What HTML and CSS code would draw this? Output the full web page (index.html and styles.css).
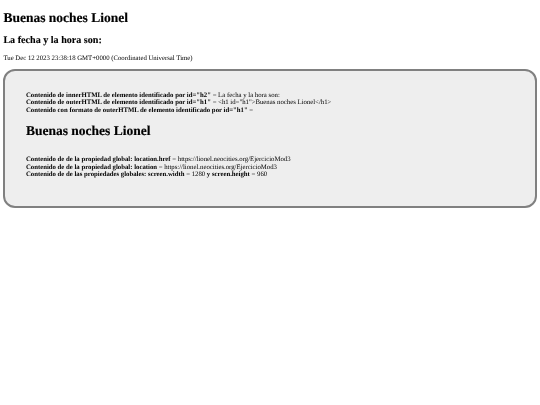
FILE: index.html
```html
<!DOCTYPE html>
<html lang="es">
<head>
<meta charset="utf-8">
<title>Ejercicio</title>
<link rel="stylesheet" href="styles.css">
</head>
<body>
<h1 class="title">Buenas noches Lionel</h1>
<h2 class="subtitle">La fecha y la hora son:</h2>
<p class="date">Tue Dec 12 2023 23:38:18 GMT+0000 (Coordinated Universal Time)</p>
<section class="panel">
<p class="lines"><b>Contenido de innerHTML de elemento identificado por id="h2"</b> = La fecha y la hora son:<br>
<b>Contenido de outerHTML de elemento identificado por id="h1"</b> = &lt;h1 id="h1"&gt;Buenas noches Lionel&lt;/h1&gt;<br>
<b>Contenido con formato de outerHTML de elemento identificado por id="h1"</b> =</p>
<h1 class="title inner">Buenas noches Lionel</h1>
<p class="lines"><b>Contenido de de la propiedad global: location.href</b> = https://lionel.neocities.org/EjercicioMod3<br>
<b>Contenido de de la propiedad global: location</b> = https://lionel.neocities.org/EjercicioMod3<br>
<b>Contenido de de las propiedades globales: screen.width</b> = 1280 <b>y screen.height</b> = 960</p>
</section>
</body>
</html>
```
FILE: styles.css
```css
html, body {
  margin: 0;
  background: #fff;
}
body {
  padding: 3.4px;
  height: 405px;
  box-sizing: border-box;
  font-family: "Liberation Serif", "Times New Roman", serif;
  font-size: 6.75px;
  color: #000;
  text-rendering: geometricPrecision;
  filter: blur(0.2px);
}
.title {
  margin: 0;
  font-size: 13.5px;
  line-height: 15.5px;
  padding-top: 6.5px;
  -webkit-text-stroke: 0.15px #000;
}
.subtitle {
  margin: 0;
  padding-top: 9.6px;
  font-size: 10.1px;
  line-height: 11.5px;
  -webkit-text-stroke: 0.1px #000;
}
.date {
  margin: 0;
  padding-top: 8.9px;
  line-height: 8px;
}
.panel {
  margin-top: 5.5px;
  height: 139px;
  box-sizing: border-box;
  padding: 21.1px 20.5px 0;
  background: #eee;
  border: 2px solid #808080;
  border-radius: 12px;
}
.lines {
  margin: 0;
  line-height: 7.5px;
}
.title.inner {
  padding: 0;
  margin: 9px 0 17.3px;
}
```
